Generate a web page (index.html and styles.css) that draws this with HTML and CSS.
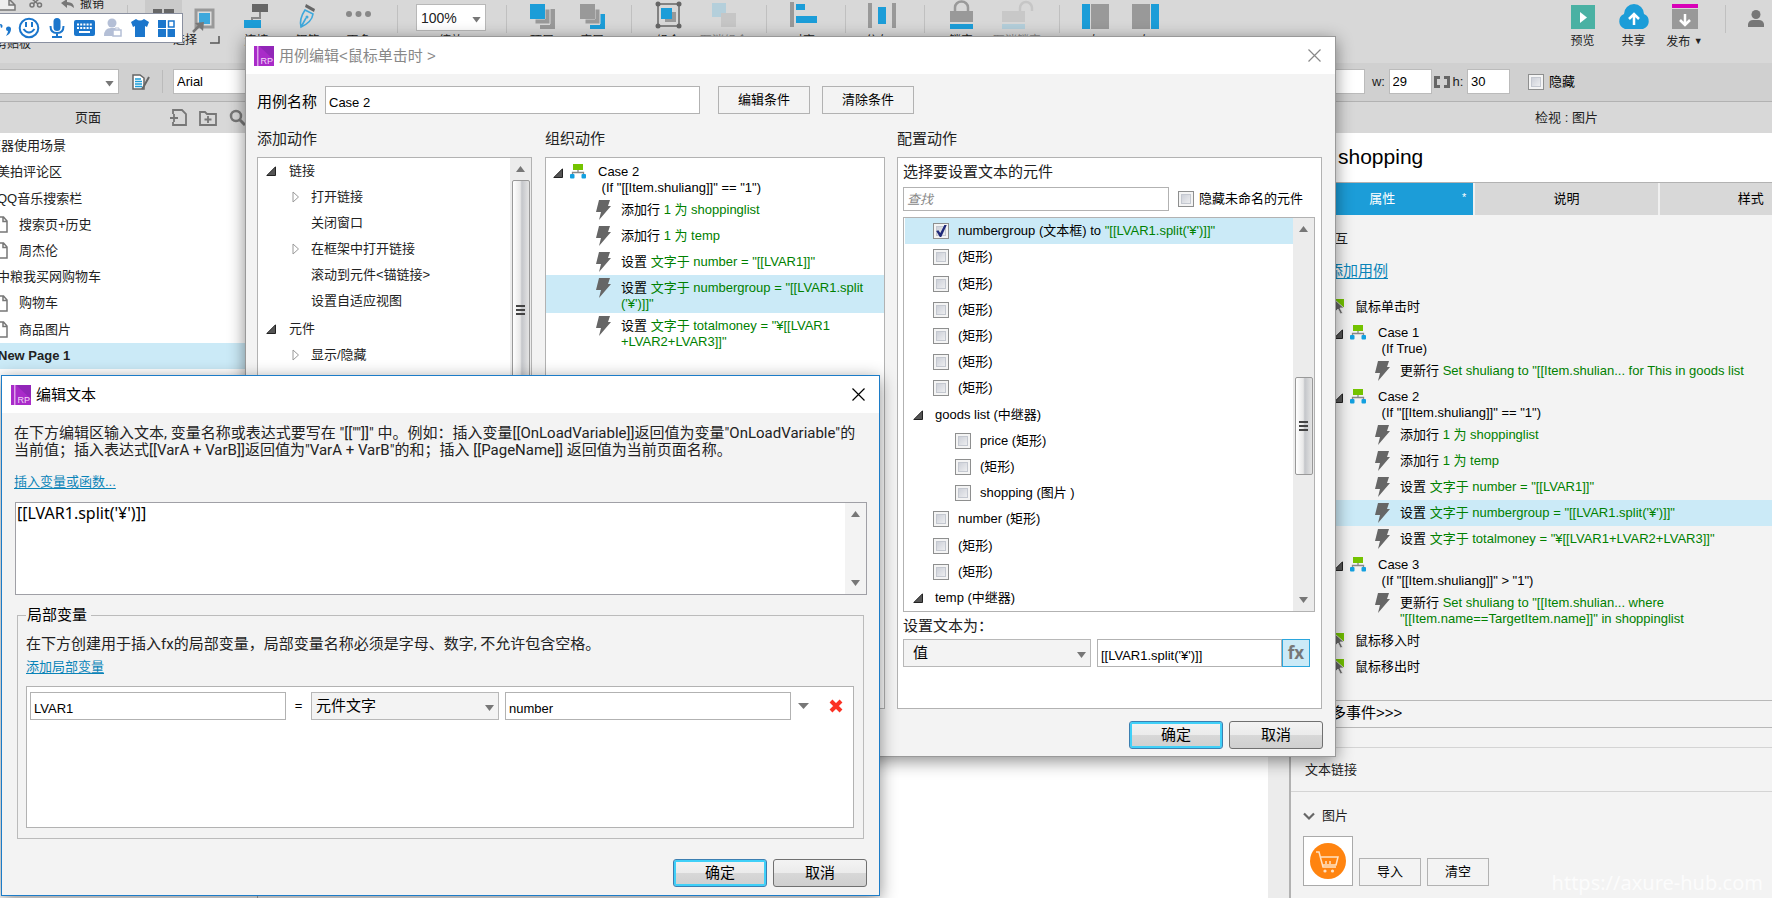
FILE: index.html
```html
<!DOCTYPE html>
<html lang="zh-CN">
<head>
<meta charset="utf-8">
<title>用例编辑</title>
<link rel="stylesheet" href="styles.css">
</head>
<body>
<svg class="defs" aria-hidden="true">
  <symbol id="bolt" viewBox="0 0 15 20"><path d="M3 0h11l-2 6h3L3 20l2-8H0z" fill="#666"/></symbol>
  <symbol id="case" viewBox="0 0 16 15"><path d="M8 5v4M2.500 11V8.500h11V11" stroke="#888" stroke-width="1.300" fill="none"/><rect x="3" width="10" height="6" fill="#74c300"/><rect y="10" width="4.500" height="4.500" rx="1" fill="#12a0e0"/><rect x="11.500" y="10" width="4.500" height="4.500" rx="1" fill="#12a0e0"/></symbol>
  <symbol id="open" viewBox="0 0 10 10"><path d="M9.500.8v8.700H.8z" fill="#555" stroke="#222"/></symbol>
  <symbol id="shut" viewBox="0 0 8 12"><path d="M1 1v10l5.500-5z" fill="#fff" stroke="#999"/></symbol>
  <symbol id="page" viewBox="0 0 14 17"><path d="M1 1h8.500L13 5v11H1zM9 1v4.500h4" fill="#fff" stroke="#777" stroke-width="1.500"/></symbol>
  <symbol id="rp" viewBox="0 0 20 20"><path d="M0 0h20v20H0z" fill="#a92bc9"/><path d="M5 0h15v14z" fill="#9226b8"/><path d="M3 0h1.500v20H3z" fill="#dca0ea"/><text x="6.500" y="18" font-size="9" fill="#f2d8f8" font-family="Liberation Sans">RP</text></symbol>
  <symbol id="close" viewBox="0 0 13 13"><path d="M.5.500l12 12M12.500.5l-12 12" stroke="currentColor" stroke-width="1.200"/></symbol>
  <symbol id="event" viewBox="0 0 16 16"><path d="M2 0h14v8H2z" fill="#74c300"/><path d="M7 1v12l3-3 2.500 5 2-1-2.500-5h4z" fill="#666" stroke="#eee" stroke-width=".8"/></symbol>
</svg>

<div class="app">
  <header class="toolbar">
    <div class="clip">
      <div class="clip-row">
        <svg width="17" height="14" viewBox="0 0 17 14"><path d="M0 2h9l6 6v5H0M9 2v6h6" fill="#eee" stroke="#777" stroke-width="1.500"/></svg>
        <svg width="14" height="10" viewBox="0 0 14 10"><path d="M3 0l6 5M10 0L4 5" stroke="#777" stroke-width="1.500"/><circle cx="3" cy="6" r="2" fill="none" stroke="#777" stroke-width="1.500"/><circle cx="10.500" cy="6" r="2" fill="none" stroke="#777" stroke-width="1.500"/></svg>
        <svg width="14" height="10" viewBox="0 0 14 10"><path d="M0 4l6-4v3q7 0 7 6-3-3-7-3v3z" fill="#777"/></svg>
        <span>撤销</span>
      </div>
      <span class="clip-name">剪贴板</span>
    </div>
    <i class="sep"></i>
    <div class="mode">
      <div class="mode-icons">
        <button class="on" aria-label="选择"><svg width="21" height="24" viewBox="0 0 21 24"><path d="M0 0h9v11H0zM11 0h10v11H11z" fill="#666"/></svg></button>
        <button aria-label="包含"><svg width="24" height="26" viewBox="0 0 24 26"><rect x="4" y="2" width="17" height="17" fill="#ddd" stroke="#999" stroke-width="3"/><path d="M7 5h11v11H7z" fill="#3ea8dc"/><path d="M1 24l7-7" stroke="#777" stroke-width="2.500"/><path d="M3 15l9-1-1 9z" fill="#777"/></svg></button>
      </div>
      <div class="mode-name">选择<svg width="10" height="8" viewBox="0 0 10 8"><path d="M9 0v7H0" fill="none" stroke="#555" stroke-width="1.500"/></svg></div>
    </div>
    <button class="tool wide"><svg width="25" height="26" viewBox="0 0 25 26"><path d="M16 8v6H8v4" fill="none" stroke="#888" stroke-width="2"/><path d="M8 0h16v8H8z" fill="#666"/><path d="M0 16h17v8H0z" fill="#1c9dd8"/></svg>连接</button>
    <button class="tool wide"><svg width="20" height="26" viewBox="0 0 20 26"><path d="M8 0l9 5-1 3-9-5z" fill="#666"/><path d="M7 6l8 4q-1 8-12 13Q1 15 7 6zM3 23l5-9" fill="none" stroke="#3ea8dc" stroke-width="1.600"/><circle cx="9" cy="13" r="1.500" fill="#3ea8dc"/></svg>钢笔</button>
    <button class="tool wide"><svg width="25" height="26" viewBox="0 0 25 26"><g fill="#888"><circle cx="3" cy="10" r="3"/><circle cx="12.500" cy="10" r="3"/><circle cx="22" cy="10" r="3"/></g></svg>更多</button>
    <i class="sep after-more"></i>
    <label class="zoom"><span class="pick"><select><option>100%</option></select></span>缩放</label>
    <i class="sep"></i>
    <div class="group near">
      <button class="tool"><svg width="25" height="26" viewBox="0 0 25 26"><path d="M20 5h5v20H10v-4h10z" fill="#999"/><path d="M5 15h10V5h5v15H5z" fill="#999" stroke="#d8d8d8"/><path d="M0 0h15v15H0z" fill="#1c9dd8"/></svg>顶层</button>
      <button class="tool"><svg width="25" height="26" viewBox="0 0 25 26"><path d="M20 10h5v15H10v-4h10z" fill="#1c9dd8"/><path d="M5 15h10V5h5v15H5z" fill="#999" stroke="#d8d8d8"/><path d="M0 0h15v15H0z" fill="#999"/></svg>底层</button>
    </div>
    <i class="sep"></i>
    <div class="group">
      <button class="tool"><svg width="27" height="26" viewBox="0 0 27 26"><rect x="3" y="0" width="21" height="22" fill="none" stroke="#666" stroke-width="1.500"/><path d="M10 8h11v10H10z" fill="#999"/><path d="M6 4h11v11H6z" fill="#1c9dd8"/><g fill="#666"><circle cx="3" cy="0" r="2.500"/><circle cx="24" cy="0" r="2.500"/><circle cx="3" cy="22" r="2.500"/><circle cx="24" cy="22" r="2.500"/></g></svg>组合</button>
      <button class="tool off"><svg width="26" height="26" viewBox="0 0 26 26"><path d="M1-1h14v14H1z" fill="#b4cfdb"/><path d="M10 9h15v14H10z" fill="#c6c6c6"/></svg>取消组合</button>
    </div>
    <i class="sep"></i>
    <div class="group">
      <button class="tool"><svg width="27" height="26" viewBox="0 0 27 26"><path d="M0-2h4v25H0z" fill="#999"/><path d="M6 0h9v6H6zM6 12h21v7H6z" fill="#1c9dd8"/></svg>对齐</button>
    </div>
    <i class="sep"></i>
    <div class="group">
      <button class="tool"><svg width="28" height="26" viewBox="0 0 28 26"><path d="M0-1h4v25H0zM24-1h4v25h-4z" fill="#999"/><path d="M10 3h8v17h-8z" fill="#1c9dd8"/></svg>分布 ▾</button>
    </div>
    <i class="sep"></i>
    <div class="group">
      <button class="tool"><svg width="23" height="26" viewBox="0 0 23 26"><path d="M5 8V3.500a6.500 6 0 0 1 13 0V8" fill="none" stroke="#999" stroke-width="2.500"/><path d="M0 7h23v11H0z" fill="#999"/><path d="M0 20h23v5H0z" fill="#1c9dd8"/></svg>锁定</button>
      <button class="tool off"><svg width="31" height="26" viewBox="0 0 31 26"><path d="M18 8V4a6 6 0 0 1 12 0v3" fill="none" stroke="#c6c6c6" stroke-width="2.500"/><path d="M0 7h23v11H0z" fill="#c8c8c8"/><path d="M0 20h23v5H0z" fill="#b4cfdb"/></svg>取消锁定</button>
    </div>
    <i class="sep"></i>
    <div class="group near">
      <button class="tool"><svg width="27" height="26" viewBox="0 0 27 26"><path d="M0 0h8v25H0z" fill="#1c9dd8"/><path d="M9 0h18v25H9z" fill="#999"/></svg>左</button>
      <button class="tool"><svg width="27" height="26" viewBox="0 0 27 26"><path d="M19 0h8v25h-8z" fill="#1c9dd8"/><path d="M0 0h18v25H0z" fill="#999"/></svg>右</button>
    </div>
    <div class="share">
      <button class="tool wide"><svg width="24" height="26" viewBox="0 0 24 26"><path d="M0 1h24v24H0z" fill="#4ab1a3"/><path d="M9 8v11l7-5.500z" fill="#fff"/></svg>预览</button>
      <button class="tool wide"><svg width="34" height="26" viewBox="0 0 34 26"><path d="M8 25a8 8 0 0 1-1-15 10 10 0 0 1 20 0 8 8 0 0 1-1 15z" fill="#1c9dd8"/><path d="M17 21V11M12 15l5-5 5 5" fill="none" stroke="#fff" stroke-width="2.500"/></svg>共享</button>
      <button class="tool wide"><svg width="26" height="26" viewBox="0 0 26 26"><path d="M0 0h26v4H0z" fill="#d800b8"/><path d="M0 5h26v20H0z" fill="#999"/><path d="M13 10v11M8 16l5 5 5-5" fill="none" stroke="#fff" stroke-width="2.500"/></svg><span>发布 <small>▼</small></span></button>
      <i class="sep"></i>
      <svg class="user" width="16" height="17" viewBox="0 0 16 17"><circle cx="8" cy="4.500" r="4.500" fill="#777"/><path d="M0 17v-3q1-4 5-4h6q4 0 5 4v3z" fill="#777"/></svg>
    </div>
  </header>

  <div class="formats">
    <div class="pick style"><select aria-label="样式"><option></option></select></div>
    <svg width="18" height="16" viewBox="0 0 18 16"><path d="M1 1h7l4 3v11H1z" fill="#fff" stroke="#666" stroke-width="1.500"/><path d="M3 5h6M3 7.500h7M3 10h7M3 12.500h7" stroke="#1c9dd8" stroke-width="1.300"/><path d="M17 3l-5 9-2 3" stroke="#666" stroke-width="2"/></svg>
    <i class="rule"></i>
    <input class="font" aria-label="字体" value="Arial">
    <div class="sizes">
      <input aria-label="y" value="">
      <label>w: <input value="29"></label>
      <svg width="16" height="12" viewBox="0 0 16 12"><path d="M6 1.500H1.500v9H6M10 1.500h4.500v9H10" fill="none" stroke="#666" stroke-width="3"/></svg>
      <label>h: <input value="30"></label>
      <label class="tick"><input type="checkbox">隐藏</label>
    </div>
  </div>

  <main class="work">
    <aside class="pages">
      <h2 class="bar">页面
        <span class="bar-icons">
        <svg width="17" height="17" viewBox="0 0 17 17"><path d="M3 5V1h9l4 4v11H3v-3M0 9h8M4 5v8" fill="none" stroke="#777" stroke-width="1.800"/></svg>
        <svg width="18" height="17" viewBox="0 0 18 17"><path d="M1 3h5l2 2h9v11H1zM9 7v7M5.500 10.500h7" fill="none" stroke="#777" stroke-width="1.800"/></svg>
        <svg width="17" height="17" viewBox="0 0 17 17"><circle cx="7" cy="7" r="5" fill="none" stroke="#777" stroke-width="2.500"/><path d="M11 11l5 5" stroke="#777" stroke-width="3"/></svg>
        </span>
      </h2>
      <ul>
        <li class="deep">览器使用场景</li>
        <li>美拍评论区</li>
        <li>QQ音乐搜索栏</li>
        <li class="kid"><svg><use href="#page"/></svg>搜索页+历史</li>
        <li class="kid"><svg><use href="#page"/></svg>周杰伦</li>
        <li>中粮我买网购物车</li>
        <li class="kid"><svg><use href="#page"/></svg>购物车</li>
        <li class="kid"><svg><use href="#page"/></svg>商品图片</li>
        <li class="sel">New Page 1</li>
      </ul>
    </aside>
    <section class="canvas"></section>
    <aside class="inspect">
      <h2 class="bar">检视 : 图片</h2>
      <div class="title">shopping</div>
      <nav class="tabs"><button class="on">属性<sup>*</sup></button><button>说明</button><button>样式</button></nav>
      <p class="lead">交互</p>
      <p class="add"><a href="#">添加用例</a></p>
      <div class="rules">
        <div class="event"><svg><use href="#event"/></svg>鼠标单击时</div>
        <div class="case"><svg class="tri"><use href="#open"/></svg><svg class="ico"><use href="#case"/></svg><div>Case 1<br>&nbsp;(If True)</div></div>
        <div class="act"><svg><use href="#bolt"/></svg><div>更新行 <em>Set shuliang to "[[Item.shulian... for This in goods list</em></div></div>
        <div class="case"><svg class="tri"><use href="#open"/></svg><svg class="ico"><use href="#case"/></svg><div>Case 2<br>&nbsp;(If "[[Item.shuliang]]" == "1")</div></div>
        <div class="act"><svg><use href="#bolt"/></svg><div>添加行 <em>1 为 shoppinglist</em></div></div>
        <div class="act"><svg><use href="#bolt"/></svg><div>添加行 <em>1 为 temp</em></div></div>
        <div class="act"><svg><use href="#bolt"/></svg><div>设置 <em>文字于 number = "[[LVAR1]]"</em></div></div>
        <div class="act sel"><svg><use href="#bolt"/></svg><div>设置 <em>文字于 numbergroup = "[[LVAR1.split('¥')]]"</em></div></div>
        <div class="act"><svg><use href="#bolt"/></svg><div>设置 <em>文字于 totalmoney = "¥[[LVAR1+LVAR2+LVAR3]]"</em></div></div>
        <div class="case"><svg class="tri"><use href="#open"/></svg><svg class="ico"><use href="#case"/></svg><div>Case 3<br>&nbsp;(If "[[Item.shuliang]]" &gt; "1")</div></div>
        <div class="act"><svg><use href="#bolt"/></svg><div>更新行 <em>Set shuliang to "[[Item.shulian... where<br>"[[Item.name==TargetItem.name]]" in shoppinglist</em></div></div>
        <div class="event"><svg><use href="#event"/></svg>鼠标移入时</div>
        <div class="event"><svg><use href="#event"/></svg>鼠标移出时</div>
      </div>
      <div class="more">更多事件&gt;&gt;&gt;</div>
      <div class="textlink">文本链接</div>
      <div class="image">
        <h3><svg width="12" height="9" viewBox="0 0 12 9"><path d="M1 1.500l5 5 5-5" fill="none" stroke="#666" stroke-width="2.200"/></svg>图片</h3>
        <div class="image-row">
          <span class="thumb"><svg width="36" height="36" viewBox="0 0 36 36"><circle cx="18" cy="18" r="18" fill="#ff8410"/><path d="M6 9h3l4 15h13M11 14h17l-2 8H13M16 18v3M20 18v3" fill="none" stroke="#ffe2c4" stroke-width="1.500"/><circle cx="15" cy="28" r="1.600" fill="#ffe2c4"/><circle cx="22.500" cy="28" r="1.600" fill="#ffe2c4"/></svg></span>
          <button class="flat">导入</button>
          <button class="flat">清空</button>
        </div>
      </div>
    </aside>
  </main>
</div>

<div class="ime">
  <svg width="12" height="24" viewBox="0 0 12 24"><path d="M0 8a2 2 0 1 1 1 4M6 13a2 2 0 1 1 5 0q0 5-5 7 2-3 2-5-2 0-2-2z" fill="#1b76cc"/></svg>
  <svg width="22" height="22" viewBox="0 0 22 22"><circle cx="11" cy="11" r="9.300" fill="none" stroke="#1b76cc" stroke-width="2"/><path d="M8 5v5M14 5v5M5.500 12q5.500 7 11 0" fill="none" stroke="#1b76cc" stroke-width="2"/></svg>
  <svg width="16" height="22" viewBox="0 0 16 22"><rect x="4.500" y="1" width="7" height="13" rx="3.500" fill="#1b76cc"/><path d="M1.500 9q0 7 6.500 7t6.500-7M8 16v4M3 20h10" fill="none" stroke="#1b76cc" stroke-width="2"/></svg>
  <svg width="21" height="16" viewBox="0 0 21 16"><rect width="21" height="16" rx="2" fill="#1b76cc"/><path d="M3 4.500h15M3 8h15" stroke="#fff" stroke-width="2" stroke-dasharray="2 1.200"/><path d="M5 12h11" stroke="#fff" stroke-width="2"/></svg>
  <svg width="18" height="20" viewBox="0 0 18 20"><circle cx="8" cy="5" r="4.500" fill="#b4bfd6"/><path d="M0 18q0-8 7-8h4v8z" fill="#b4bfd6"/><rect x="9" y="12" width="8" height="6" fill="#fff" stroke="#b4bfd6" stroke-width="1.500"/><path d="M11 12v-2h4v2" fill="none" stroke="#b4bfd6"/></svg>
  <svg width="18" height="18" viewBox="0 0 18 18"><path d="M5 0q4 3 8 0l5 3-2 5-2-1v11H4V7L2 8 0 3z" fill="#1b76cc"/></svg>
  <svg width="17" height="17" viewBox="0 0 17 17"><path d="M0 0h8v8H0zM0 9h8v8H0zM9.500 9H17v8H9.500z" fill="#1b76cc"/><rect x="10.500" y="1" width="5.500" height="6" fill="#fff" stroke="#1b76cc" stroke-width="1.500"/></svg>
</div>

<section class="win case-win">
  <header class="win-title dim"><svg class="logo"><use href="#rp"/></svg><h1>用例编辑&lt;鼠标单击时 &gt;</h1><button class="x" aria-label="关闭"><svg><use href="#close"/></svg></button></header>
  <div class="case-body">
    <div class="case-name"><label for="cn">用例名称</label><input id="cn" value="Case 2"><button class="flat big">编辑条件</button><button class="flat big">清除条件</button></div>
    <div class="cols">
      <div class="col add-col"><h2>添加动作</h2>
        <div class="box tree-box">
          <ul class="tree">
            <li><svg class="tri"><use href="#open"/></svg>链接</li>
            <li class="k"><svg class="shut"><use href="#shut"/></svg>打开链接</li>
            <li class="k"><span class="shut"></span>关闭窗口</li>
            <li class="k"><svg class="shut"><use href="#shut"/></svg>在框架中打开链接</li>
            <li class="k"><span class="shut"></span>滚动到元件&lt;锚链接&gt;</li>
            <li class="k"><span class="shut"></span>设置自适应视图</li>
            <li class="next"><svg class="tri"><use href="#open"/></svg>元件</li>
            <li class="k"><svg class="shut"><use href="#shut"/></svg>显示/隐藏</li>
          </ul>
          <div class="scroll"><i class="up"></i><i class="thumb-bar long"></i></div>
        </div>
      </div>
      <div class="col org-col"><h2>组织动作</h2>
        <div class="box rules-box">
          <div class="case"><svg class="tri"><use href="#open"/></svg><svg class="ico"><use href="#case"/></svg><div>Case 2<br>&nbsp;(If "[[Item.shuliang]]" == "1")</div></div>
          <div class="act"><svg><use href="#bolt"/></svg><div>添加行 <em>1 为 shoppinglist</em></div></div>
          <div class="act"><svg><use href="#bolt"/></svg><div>添加行 <em>1 为 temp</em></div></div>
          <div class="act"><svg><use href="#bolt"/></svg><div>设置 <em>文字于 number = "[[LVAR1]]"</em></div></div>
          <div class="act sel"><svg><use href="#bolt"/></svg><div>设置 <em>文字于 numbergroup = "[[LVAR1.split<br>('¥')]]"</em></div></div>
          <div class="act"><svg><use href="#bolt"/></svg><div>设置 <em>文字于 totalmoney = "¥[[LVAR1<br>+LVAR2+LVAR3]]"</em></div></div>
        </div>
      </div>
      <div class="col set-col"><h2>配置动作</h2>
        <div class="box set-box">
          <h3>选择要设置文本的元件</h3>
          <div class="find"><input class="query" aria-label="查找" placeholder="查找"><label class="tick"><input type="checkbox">隐藏未命名的元件</label></div>
          <div class="parts">
            <div class="parts-list">
              <label class="sel"><input type="checkbox" checked><span>numbergroup (文本框) to <em>"[[LVAR1.split('¥')]]"</em></span></label>
              <label><input type="checkbox">(矩形)</label>
              <label><input type="checkbox">(矩形)</label>
              <label><input type="checkbox">(矩形)</label>
              <label><input type="checkbox">(矩形)</label>
              <label><input type="checkbox">(矩形)</label>
              <label><input type="checkbox">(矩形)</label>
              <div class="head"><svg class="tri"><use href="#open"/></svg>goods list (中继器)</div>
              <label class="sub"><input type="checkbox">price (矩形)</label>
              <label class="sub"><input type="checkbox">(矩形)</label>
              <label class="sub"><input type="checkbox">shopping (图片 )</label>
              <label><input type="checkbox">number (矩形)</label>
              <label><input type="checkbox">(矩形)</label>
              <label><input type="checkbox">(矩形)</label>
              <div class="head"><svg class="tri"><use href="#open"/></svg>temp (中继器)</div>
            </div>
            <div class="scroll"><i class="up"></i><i class="thumb-bar mid"></i><i class="down"></i></div>
          </div>
          <h3 class="to">设置文本为：</h3>
          <div class="value"><span class="pick"><select aria-label="设置文本为"><option>值</option></select></span><input aria-label="值" value="[[LVAR1.split('¥')]]"><button class="fx">fx</button></div>
        </div>
      </div>
    </div>
    <footer class="actions"><button class="glass main">确定</button><button class="glass">取消</button></footer>
  </div>
</section>

<section class="win text-win">
  <header class="win-title"><svg class="logo"><use href="#rp"/></svg><h1>编辑文本</h1><button class="x" aria-label="关闭"><svg><use href="#close"/></svg></button></header>
  <div class="text-body">
    <p>在下方编辑区输入文本, 变量名称或表达式要写在 "[[""]]" 中。例如：插入变量[[OnLoadVariable]]返回值为变量"OnLoadVariable"的<br>当前值；插入表达式[[VarA + VarB]]返回值为"VarA + VarB"的和；插入 [[PageName]] 返回值为当前页面名称。</p>
    <a href="#">插入变量或函数...</a>
    <div class="editor"><textarea aria-label="文本">[[LVAR1.split('¥')]]</textarea><div class="scroll pale"><i class="up"></i><i class="down"></i></div></div>
    <fieldset>
      <legend>局部变量</legend>
      <p>在下方创建用于插入fx的局部变量，局部变量名称必须是字母、数字, 不允许包含空格。</p>
      <a href="#">添加局部变量</a>
      <div class="vars">
        <div class="var"><input class="v-name" aria-label="变量名" value="LVAR1"><span class="eq">=</span><span class="pick"><select aria-label="类型"><option>元件文字</option></select></span><input class="v-part" aria-label="元件" value="number"><i class="down"></i>
        <button class="del" aria-label="删除"><svg width="14" height="14" viewBox="0 0 14 14"><path d="M2 2l10 10M12 2L2 12" stroke="#fb3123" stroke-width="4"/></svg></button></div>
      </div>
    </fieldset>
    <footer class="actions"><button class="glass main">确定</button><button class="glass">取消</button></footer>
  </div>
</section>
<div class="mark">https://axure-hub.com</div>
</body>
</html>
```

FILE: styles.css
```css
* { box-sizing: border-box; }
body { margin: 0; height: 100vh; overflow: hidden; position: relative; font: 13px/16px "Liberation Sans", "Noto Sans CJK SC", sans-serif; color: #000; background: #f3f3f3; }
h1, h2, h3, p, ul, fieldset { margin: 0; padding: 0; font-weight: normal; list-style: none; }
button, input, select, textarea { font: inherit; color: inherit; margin: 0; padding: 0; border: 0; background: none; border-radius: 0; }
em { font-style: normal; color: #008000; }
a { color: #0b84b8; text-underline-offset: 2px; }
svg { display: block; flex: none; }
.defs { position: absolute; width: 0; height: 0; }
.tri { width: 10px; height: 10px; }
.sel { background: #cbeaf7; }

/* application behind the dialogs */
.app { display: flex; flex-direction: column; height: 100vh; overflow: hidden; }
.toolbar { display: flex; flex: none; height: 63px; background: #d8d8d8; font-size: 12px; line-height: 16px; white-space: nowrap; color: #222; }
.sep { flex: none; width: 1px; height: 28px; margin-top: 5px; background: #c0c0c0; }
.clip { flex: none; width: 127px; display: flex; flex-direction: column; justify-content: space-between; height: 52px; }
.clip-row { display: flex; gap: 12px; align-items: center; height: 8px; }
.clip-row span { margin-left: -7px; }
.clip-row svg:nth-child(3) { margin-left: 6px; }
.clip-name { margin-left: -5px; }
.mode { flex: none; width: 77px; margin: 0 9px 0 17px; }
.mode-icons { display: flex; gap: 10px; height: 32px; }
.mode-icons button { padding: 5px 0 0 8px; height: 37px; }
.mode-icons .on { width: 37px; background: #cacaca; }
.mode-icons button + button { padding: 4px 0 0; }
.mode-name { display: flex; justify-content: space-between; align-items: center; padding-left: 28px; }
.mode-name svg { margin-right: 2px; }
.tool { flex: none; width: 56px; height: 63px; display: flex; flex-direction: column; align-items: center; padding-top: 4px; overflow: visible; }
.tool svg { margin-bottom: 3px; overflow: visible; height: 26px; }
.tool.off { color: #888; }
.tool.wide { width: 51px; }
.tool small { font-size: 9px; vertical-align: 2px; }
.group { display: flex; flex: none; padding: 0 14px 0 8px; }
.group.near { padding-left: 10px; }
.near .tool { width: 50px; }
.after-more { margin-left: 13px; }
.zoom { flex: none; width: 108px; padding: 4px 20px 0 18px; text-align: center; }
.pick { position: relative; display: block; border: 1px solid #b8b8b8; background: #fff; }
.pick select { appearance: none; width: 100%; height: 100%; display: block; padding: 0 24px 0 4px; outline: 0; }
.pick::after, .down, .up { content: ""; width: 9px; height: 6px; background: #777; clip-path: polygon(0 0, 100% 0, 50% 100%); }
.pick::after { position: absolute; right: 4px; top: 50%; margin-top: -1px; pointer-events: none; }
.up { clip-path: polygon(0 100%, 100% 100%, 50% 0); }
.zoom .pick { height: 27px; margin-bottom: 2px; font-size: 14px; }
.share { display: flex; margin-left: auto; padding-right: 8px; }
.share .sep { margin: 5px 22px 0 15px; }
.user { margin-top: 10px; }

.formats { flex: none; height: 39px; display: flex; align-items: center; padding-bottom: 1px; background: #d0d0d0; border-bottom: 1px solid #b2b2b2; color: #222; }
.formats input:not([type]) { height: 25px; border: 1px solid #bbb; background: #fff; padding: 0 3px; color: #000; }
.formats .style { flex: none; width: 119px; height: 25px; border-left: 0; margin-right: 13px; }
.rule { width: 1px; height: 23px; margin: 0 10px 0 12px; background: #bbb; }
.font { width: 120px; }
.sizes { display: flex; align-items: center; margin-left: auto; padding-right: 197px; }
.sizes input:not([type]) { width: 43px; }
.sizes label { margin: 0 2px 0 7px; }
.sizes svg + label { margin-left: 3px; }
.sizes .tick { margin: 0 0 0 16px; }
.tick { display: flex; align-items: center; gap: 5px; white-space: nowrap; color: #000; }
input[type=checkbox] { appearance: none; flex: none; width: 16px; height: 16px; border: 1px solid #8e8f8f; background: linear-gradient(135deg, #c2c6d0, #f8f8f8); box-shadow: inset 0 0 0 2px #f4f4f4, inset 0 0 0 3px #c4c8d0; }
input[type=checkbox]:checked::before { content: ""; display: block; width: 12px; height: 12px; margin: 1px; background: #1f2a7a; clip-path: polygon(10% 50%, 28% 42%, 44% 66%, 78% 0, 98% 0, 52% 100%, 40% 100%); }

.work { flex: 1; min-height: 0; display: flex; overflow: hidden; }
.pages { flex: none; width: 258px; background: #fff; border-right: 1px solid #b2b2b2; color: #222; }
.bar { flex: none; height: 31px; background: #d8d8d8; font-size: 13px; line-height: 32px; text-align: center; color: #222; }
.pages .bar { display: flex; align-items: center; padding-left: 75px; }
.bar-icons { display: flex; gap: 12px; margin-left: 69px; }
.pages ul { display: flex; flex-direction: column; height: 236px; }
.pages li { flex: 1; display: flex; align-items: center; text-indent: -3px; white-space: nowrap; overflow: hidden; }
.pages .deep { text-indent: -12px; }
.pages .sel { font-weight: bold; text-indent: -2px; }
.pages .kid { text-indent: 0; gap: 11px; }
.pages li svg { width: 14px; height: 17px; margin-left: -6px; }
.canvas { flex: 1; background: #fff; border-right: 21px solid #ececec; }
.inspect { flex: none; width: 553px; margin-right: -70px; border-left: 2px solid #b2b2b2; background: #f3f3f3; display: flex; flex-direction: column; }
.inspect > * { flex: none; }
.title { height: 50px; padding-left: 47px; background: #fff; border-bottom: 1px solid #b2b2b2; font-size: 21px; line-height: 48px; }
.tabs { display: flex; gap: 2px; background: #f0f0f0; }
.tabs button { flex: 1; height: 32px; background: #d8d8d8; position: relative; }
.tabs .on { background: #1c9dd8; color: #fff; }
.tabs sup { position: absolute; right: 7px; top: 6px; line-height: 16px; }
.lead { padding: 16px 0 0 31px; color: #222; }
.add { padding: 15px 0 0 37px; font-size: 15px; line-height: 18px; }
.rules { padding: 14px 0 20px; }
.event { display: flex; align-items: center; gap: 11px; height: 26px; padding-left: 37px; }
.event svg { width: 16px; height: 16px; }
.case { display: flex; align-items: flex-start; height: 38px; padding: 5px 0 0 42px; }
.case .tri { margin: 4px 7px 0 0; }
.case .ico { width: 16px; height: 15px; margin: 0 12px 0 0; }
.act { display: flex; align-items: flex-start; min-height: 26px; padding: 5px 0 1px 84px; white-space: nowrap; }
.act svg { width: 15px; height: 20px; margin: -2px 10px 0 0; }
.more { height: 28px; padding: 3px 0 0 25px; border: solid #b8b8b8; border-width: 1px 0; font-size: 15px; line-height: 18px; }
.textlink { margin-top: 19px; height: 45px; border: solid #d4d4d4; border-width: 1px 0; padding-left: 14px; line-height: 44px; color: #222; }
.image { padding: 16px 12px; }
.image h3 { display: flex; align-items: center; gap: 7px; font-size: 13px; color: #222; }
.image-row { display: flex; align-items: flex-end; gap: 6px; padding-top: 12px; }
.thumb { border: 1px solid #aaa; background: #fff; padding: 6px; }
.flat { width: 62px; height: 28px; border: 1px solid #b2b2b2; background: #f3f3f3; }

.ime { position: absolute; left: 0; top: 13px; height: 30px; display: flex; align-items: center; gap: 9px; padding: 0 7px 0 0; background: #fff; border: 1px solid #8a90a0; border-left: 0; }
.ime svg:first-child { margin-right: -3px; }

/* dialogs */
.win { position: absolute; background: #f3f3f3; box-shadow: 0 4px 16px rgba(0, 0, 0, .45); }
.win-title { display: flex; align-items: center; height: 37px; padding: 0 14px 0 9px; background: #fff; }
.win-title h1 { flex: 1; padding-left: 5px; font-size: 15px; line-height: 20px; }
.logo { width: 20px; height: 20px; }
.x svg { width: 13px; height: 13px; }
.dim { color: #888; }
.case-win { left: 245px; top: 36px; width: 1091px; border: 1px solid #999; }
.case-win .win-title { padding-left: 8px; }
.case-body { padding: 12px 13px 7px 11px; }
.case-name { display: flex; align-items: center; height: 28px; }
.case-name label { width: 68px; font-size: 15px; padding-top: 4px; }
.case-name input, .query, .value input, .var input { border: 1px solid #b2b2b2; background: #fff; padding: 4px 3px 0; height: 28px; }
.case-name input { width: 375px; margin-right: 18px; }
.big { width: 92px; margin-right: 12px; }
.cols { display: flex; gap: 12px; padding-top: 14px; }
.col { display: flex; flex-direction: column; }
.col > h2, .set-box h3 { font-size: 15px; line-height: 20px; color: #222; }
.col > h2 { height: 29px; padding-top: 1px; }
.add-col { width: 275px; margin-right: 1px; }
.org-col { width: 340px; }
.set-col { flex: 1; }
.box { flex: 1; min-height: 552px; background: #fff; border: 1px solid #b2b2b2; }
.tree-box { display: flex; }
.tree { flex: 1; color: #222; }
.tree li { display: flex; align-items: center; height: 26px; padding-left: 8px; gap: 13px; }
.tree .next { margin-top: 2px; }
.tree .k { padding-left: 34px; gap: 11px; }
.shut { width: 8px; height: 12px; }
.scroll { flex: none; width: 21px; background: #ececec; display: flex; flex-direction: column; align-items: center; padding: 8px 0; }
.scroll .down { margin-top: auto; }
.pale { background: #f3f3f3; }
.thumb-bar { width: 18px; border: 1px solid #999; border-radius: 2px; background: linear-gradient(90deg, #fff, #e8e8e8 45%, #c4c6ca 55%, #e4e4e4); display: flex; align-items: center; justify-content: center; }
.thumb-bar::before { content: ""; width: 9px; height: 10px; background: repeating-linear-gradient(#444 0 2px, transparent 2px 4px); }
.long { height: 260px; margin-top: 8px; }
.mid { height: 98px; margin-top: 145px; }
.rules-box { padding-top: 1px; }
.rules-box .case { padding-left: 7px; }
.rules-box .act { padding-left: 50px; }
.set-box { padding: 4px 6px 0 5px; }
.find { display: flex; align-items: center; padding-top: 5px; gap: 9px; }
.find .query { width: 266px; height: 24px; padding: 0 3px; }
.query::placeholder { color: #888; font-style: italic; }
.parts { display: flex; height: 395px; margin-top: 6px; border: 1px solid #b2b2b2; }
.parts-list { flex: 1; display: flex; flex-direction: column; padding: 0 0 0 1px; }
.parts-list > * { flex: 1; display: flex; align-items: center; gap: 9px; padding-left: 28px; }
.parts-list .sub { padding-left: 50px; }
.parts-list .head { padding-left: 8px; gap: 12px; }
.to { padding-top: 4px; }
.value { display: flex; padding-top: 3px; }
.value .pick, .var .pick { background: #f3f3f3; width: 188px; height: 28px; font-size: 15px; margin-right: 6px; }
.value select { padding-left: 9px; }
.value input { width: 185px; }
.fx { width: 28px; height: 28px; border: 1px solid #2ba6dd; background: #cbeaf7; color: #777; font: bold 17px/20px "Open Sans", sans-serif; }
.actions { display: flex; justify-content: flex-end; gap: 6px; padding-top: 12px; }
.case-win .actions { margin-right: -1px; }
.glass { width: 94px; height: 28px; font-size: 15px; border: 1px solid #707070; border-radius: 3px; background: linear-gradient(#f3f3f3, #ebebeb 50%, #d8d8d8 50%, #cfcfcf); }
.main { border-color: #3c7fb1; box-shadow: inset 0 0 0 2px #40d0f8; }

.text-win { left: 1px; top: 375px; width: 879px; border: 1px solid #1c7cc8; }
.text-body { padding: 12px 12px 8px; }
.text-body > p, fieldset p { font-family: Roboto, "Noto Sans CJK SC", sans-serif; }
.text-body > p { font-size: 15px; line-height: 17px; white-space: nowrap; color: #222; }
.text-body > a { display: block; width: max-content; margin: 15px 0 12px; }
.editor { display: flex; height: 93px; margin-left: 1px; border: 1px solid #a0a0a6; background: #fff; }
.editor textarea { flex: 1; resize: none; padding: 0 1px; outline: 0; font: 16px/20px "Noto Sans", sans-serif; }
fieldset { margin: 9px 3px 0 3px; min-width: 0; border: 1px solid #bbb; padding: 7px 9px 10px 8px; }
legend { margin-left: 0; padding: 0 4px 0 1px; font-size: 15px; line-height: 22px; }
fieldset p { font-size: 15px; line-height: 22px; color: #222; }
fieldset a { display: block; width: max-content; margin: 4px 0 11px; }
.vars { height: 142px; border: 1px solid #b2b2b2; background: #fff; padding: 5px 3px; }
.var { display: flex; align-items: center; }
.var .v-name { width: 256px; }
.eq { width: 25px; text-align: center; }
.var .v-part { width: 286px; margin-right: 7px; }
.var > .down { width: 11px; }
.del { margin-left: 20px; }
.text-win .actions { padding-top: 20px; }

.mark { position: absolute; right: 9px; bottom: 2px; color: rgba(255, 255, 255, .75); font: 20px/26px "Noto Sans", sans-serif; }
```
